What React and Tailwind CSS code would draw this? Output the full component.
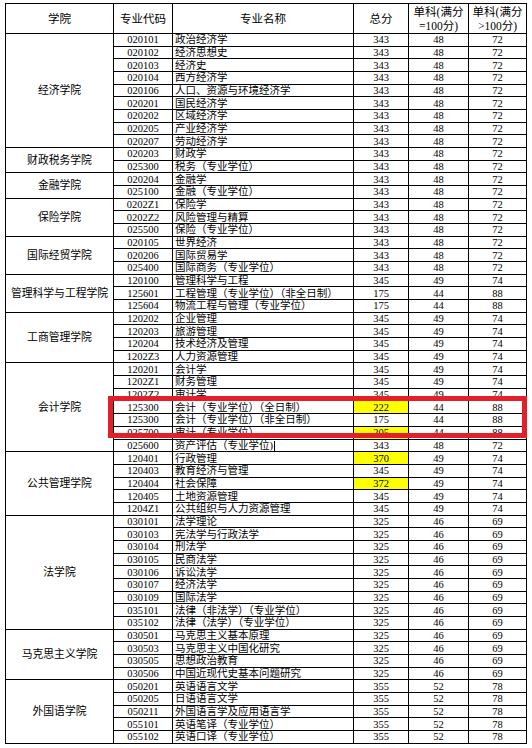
import React from "react";

const groups = [
  {
    name: "经济学院",
    rows: [
      ["020101", "政治经济学", "343", "48", "72"],
      ["020102", "经济思想史", "343", "48", "72"],
      ["020103", "经济史", "343", "48", "72"],
      ["020104", "西方经济学", "343", "48", "72"],
      ["020106", "人口、资源与环境经济学", "343", "48", "72"],
      ["020201", "国民经济学", "343", "48", "72"],
      ["020202", "区域经济学", "343", "48", "72"],
      ["020205", "产业经济学", "343", "48", "72"],
      ["020207", "劳动经济学", "343", "48", "72"],
    ],
  },
  {
    name: "财政税务学院",
    rows: [
      ["020203", "财政学", "343", "48", "72"],
      ["025300", "税务（专业学位）", "343", "48", "72"],
    ],
  },
  {
    name: "金融学院",
    rows: [
      ["020204", "金融学", "343", "48", "72"],
      ["025100", "金融（专业学位）", "343", "48", "72"],
    ],
  },
  {
    name: "保险学院",
    rows: [
      ["0202Z1", "保险学", "343", "48", "72"],
      ["0202Z2", "风险管理与精算", "343", "48", "72"],
      ["025500", "保险（专业学位）", "343", "48", "72"],
    ],
  },
  {
    name: "国际经贸学院",
    rows: [
      ["020105", "世界经济", "343", "48", "72"],
      ["020206", "国际贸易学", "343", "48", "72"],
      ["025400", "国际商务（专业学位）", "343", "48", "72"],
    ],
  },
  {
    name: "管理科学与工程学院",
    rows: [
      ["120100", "管理科学与工程", "345", "49", "74"],
      ["125601", "工程管理（专业学位）（非全日制）", "175", "44", "88"],
      ["125604", "物流工程与管理（专业学位）", "175", "44", "88"],
    ],
  },
  {
    name: "工商管理学院",
    rows: [
      ["120202", "企业管理", "345", "49", "74"],
      ["120203", "旅游管理", "345", "49", "74"],
      ["120204", "技术经济及管理", "345", "49", "74"],
      ["1202Z3", "人力资源管理", "345", "49", "74"],
    ],
  },
  {
    name: "会计学院",
    rows: [
      ["120201", "会计学", "345", "49", "74"],
      ["1202Z1", "财务管理", "345", "49", "74"],
      ["1202Z2", "审计学", "345", "49", "74"],
      ["125300", "会计（专业学位）（全日制）", "222", "44", "88", true],
      ["125300", "会计（专业学位）（非全日制）", "175", "44", "88"],
      ["025700", "审计（专业学位）", "205", "44", "88", true],
      ["025600", "资产评估（专业学位)", "343", "48", "72", false, true],
    ],
  },
  {
    name: "公共管理学院",
    rows: [
      ["120401", "行政管理", "370", "49", "74", true],
      ["120403", "教育经济与管理", "345", "49", "74"],
      ["120404", "社会保障", "372", "49", "74", true],
      ["120405", "土地资源管理", "345", "49", "74"],
      ["1204Z1", "公共组织与人力资源管理", "345", "49", "74"],
    ],
  },
  {
    name: "法学院",
    rows: [
      ["030101", "法学理论", "325", "46", "69"],
      ["030103", "宪法学与行政法学", "325", "46", "69"],
      ["030104", "刑法学", "325", "46", "69"],
      ["030105", "民商法学", "325", "46", "69"],
      ["030106", "诉讼法学", "325", "46", "69"],
      ["030107", "经济法学", "325", "46", "69"],
      ["030109", "国际法学", "325", "46", "69"],
      ["035101", "法律（非法学）（专业学位）", "325", "46", "69"],
      ["035102", "法律（法学）（专业学位）", "325", "46", "69"],
    ],
  },
  {
    name: "马克思主义学院",
    rows: [
      ["030501", "马克思主义基本原理", "325", "46", "69"],
      ["030503", "马克思主义中国化研究", "325", "46", "69"],
      ["030505", "思想政治教育", "325", "46", "69"],
      ["030506", "中国近现代史基本问题研究", "325", "46", "69"],
    ],
  },
  {
    name: "外国语学院",
    rows: [
      ["050201", "英语语言文学", "355", "52", "78"],
      ["050205", "日语语言文学", "355", "52", "78"],
      ["050211", "外国语言学及应用语言学", "355", "52", "78"],
      ["055101", "英语笔译（专业学位）", "355", "52", "78"],
      ["055102", "英语口译（专业学位）", "355", "52", "78"],
    ],
  },
];

const cell = "border border-black p-0 text-center align-middle";

export default function App() {
  return (
    <div className="relative min-h-[748px] bg-white pl-[5px] pt-[3px] font-['Liberation_Serif','Noto_Sans_CJK_SC',serif] text-black">
      <table className="w-[521px] table-fixed border-collapse">
        <colgroup>
          <col className="w-[108px]" />
          <col className="w-[59px]" />
          <col className="w-[181px]" />
          <col className="w-[55px]" />
          <col className="w-[60px]" />
          <col className="w-[58px]" />
        </colgroup>
        <thead>
          <tr className="h-[30px] text-[11.5px] leading-[14px]">
            <th className={`${cell} font-normal`}>学院</th>
            <th className={`${cell} font-normal`}>专业代码</th>
            <th className={`${cell} font-normal`}>专业名称</th>
            <th className={`${cell} font-normal`}>总分</th>
            <th className={`${cell} font-normal`}>
              单科(满分
              <br />
              =100分)
            </th>
            <th className={`${cell} font-normal`}>
              单科(满分
              <br />
              &gt;100分)
            </th>
          </tr>
        </thead>
        <tbody>
          {groups.map((g) =>
            g.rows.map((r, i) => (
              <tr key={g.name + i} className="h-[12.68px] text-[10.5px] leading-[11px]">
                {i === 0 ? (
                  <td rowSpan={g.rows.length} className={`${cell} text-[10.8px]`}>
                    {g.name}
                  </td>
                ) : null}
                <td className={cell}>{r[0]}</td>
                <td className="whitespace-nowrap border border-black p-0 pl-[2px] text-left align-middle">
                  {r[1]}
                  {r[6] ? (
                    <span className="ml-[1px] inline-block h-[10px] w-px bg-black align-middle" />
                  ) : null}
                </td>
                <td className={`${cell} ${r[5] ? "bg-[#ffff00]" : ""}`}>{r[2]}</td>
                <td className={cell}>{r[3]}</td>
                <td className={cell}>{r[4]}</td>
              </tr>
            ))
          )}
        </tbody>
      </table>
      <div className="pointer-events-none absolute left-[108px] top-[396px] h-[42px] w-[419px] border-[5px] border-[#e3202a]" />
    </div>
  );
}
